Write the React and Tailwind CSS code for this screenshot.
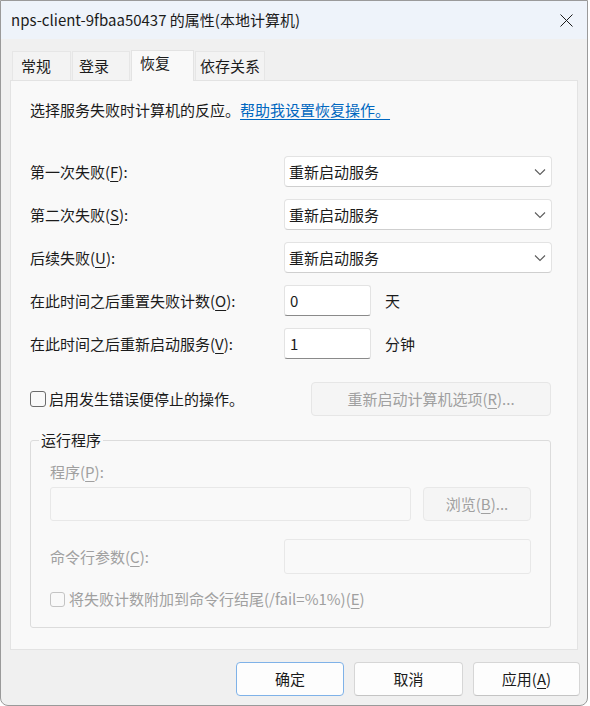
import React from 'react';

// access-key letter with underline
const K = ({ c }) => <span className="underline underline-offset-[3px]">{c}</span>;

const Chevron = () => (
  <svg width="12" height="8" viewBox="0 0 12 8">
    <path d="M1 1.5 L6 6.5 L11 1.5" fill="none" stroke="#5c5c5c" strokeWidth="1.1" />
  </svg>
);

const Select = ({ value }) => (
  <div className="w-[268px] h-full flex items-center justify-between pl-[4px] pr-[5px] bg-white border border-[#e3e3e3] border-b-[#cfcfcf] rounded-[4px]">
    <span>{value}</span>
    <Chevron />
  </div>
);

const TextBox = ({ value }) => (
  <div className="w-[87px] h-full flex items-center pl-[5px] bg-white border border-[#e3e3e3] border-b-[#8a8a8a] rounded-[3px]">
    {value}
  </div>
);

const Tab = ({ label, active, width, pad, first }) =>
  active ? (
    <div
      className={`relative z-10 ml-[1px] h-[31px] mb-[-1px] flex items-start pt-[2px] bg-[#f9f9f9] border-x border-t border-[#e3e3e3] ${width} ${pad}`}
    >
      {label}
    </div>
  ) : (
    <div
      className={`h-[29px] flex items-start pt-[4px] bg-[#f3f3f3] border-x border-t border-[#e6e6e6] ${first ? '' : 'ml-[1px]'} ${width} ${pad}`}
    >
      {label}
    </div>
  );

const Row = ({ label, children }) => (
  <div className="flex items-center h-[31px]">
    <div className="w-[254px]">{label}</div>
    {children}
  </div>
);

export default function App() {
  return (
    <div className="w-[590px] h-[706px] bg-white font-['Noto_Sans_CJK_SC','Noto_Sans',sans-serif] text-[15px] leading-[20px] text-[#1b1b1b]">
      <div className="w-[588px] h-[706px] flex flex-col bg-[#f0f0f0] border border-[#9a9a9a] rounded-b-[8px] overflow-hidden">
        {/* Title bar */}
        <div className="h-[38px] shrink-0 flex items-center justify-between pl-[10px] pr-[14px] bg-[#eef3fa]">
          <span>nps-client-9fbaa50437 的属性(本地计算机)</span>
          <svg width="13" height="13" viewBox="0 0 13 13">
            <path d="M0.5 0.5 L12.5 12.5 M12.5 0.5 L0.5 12.5" stroke="#1b1b1b" strokeWidth="1" />
          </svg>
        </div>

        <div className="flex-1 flex flex-col px-[9px]">
          {/* Tabs */}
          <div className="h-[41px] flex items-end pl-[2px]">
            <Tab label="常规" width="w-[59px]" pad="pl-[8px]" first />
            <Tab label="登录" width="w-[58px]" pad="pl-[6px]" />
            <Tab label="恢复" width="w-[63px]" pad="pl-[8px]" active />
            <Tab label="依存关系" width="w-[70px]" pad="pl-[4px]" />
          </div>

          {/* Panel */}
          <div className="h-[570px] w-[568px] bg-[#f9f9f9] border border-[#e3e3e3] pl-[19px] pt-[19px]">
            <div>
              选择服务失败时计算机的反应。
              <span className="text-[#0067c0] underline underline-offset-[3px]">帮助我设置恢复操作。</span>
            </div>

            <div className="mt-[36px] flex flex-col gap-[12px]">
              <Row label={<>第一次失败(<K c="F" />):</>}>
                <Select value="重新启动服务" />
              </Row>
              <Row label={<>第二次失败(<K c="S" />):</>}>
                <Select value="重新启动服务" />
              </Row>
              <Row label={<>后续失败(<K c="U" />):</>}>
                <Select value="重新启动服务" />
              </Row>
              <Row label={<>在此时间之后重置失败计数(<K c="O" />):</>}>
                <TextBox value="0" />
                <span className="ml-[14px]">天</span>
              </Row>
              <Row label={<>在此时间之后重新启动服务(<K c="V" />):</>}>
                <TextBox value="1" />
                <span className="ml-[14px]">分钟</span>
              </Row>
            </div>

            <div className="mt-[23px] h-[34px] flex items-center">
              <div className="w-[16px] h-[16px] rounded-[3px] border border-[#6b6b6b] bg-[#f9f9f9]" />
              <span className="ml-[3px]">启用发生错误便停止的操作。</span>
              <div className="ml-auto mr-[26px] w-[240px] h-[34px] flex items-center justify-center bg-[#f5f5f5] border border-[#e6e6e6] rounded-[4px] text-[#a0a0a0]">
                重新启动计算机选项(<K c="R" />)...
              </div>
            </div>

            {/* Group box */}
            <fieldset className="mt-[14px] w-[521px] border border-[#dcdcdc] rounded-[3px]">
              <legend className="ml-[8px] px-[2px]">运行程序</legend>
              <div className="px-[19px] pt-[12px] pb-[18px] text-[#a0a0a0]">
                <div>程序(<K c="P" />):</div>
                <div className="mt-[5px] h-[34px] flex">
                  <div className="w-[361px] h-full bg-[#f9f9f9] border border-[#e8e8e8] rounded-[3px]" />
                  <div className="ml-[12px] w-[108px] h-full flex items-center justify-center bg-[#f5f5f5] border border-[#e8e8e8] rounded-[4px]">
                    浏览(<K c="B" />)...
                  </div>
                </div>
                <div className="mt-[18px] h-[35px] flex items-center">
                  <div className="w-[234px]">命令行参数(<K c="C" />):</div>
                  <div className="w-[247px] h-full bg-[#f9f9f9] border border-[#e8e8e8] rounded-[3px]" />
                </div>
                <div className="mt-[15px] h-[20px] flex items-center">
                  <div className="w-[15px] h-[15px] rounded-[3px] border border-[#c4c4c4] bg-[#f9f9f9]" />
                  <span className="ml-[4px]">将失败计数附加到命令行结尾(/fail=%1%)(<K c="E" />)</span>
                </div>
              </div>
            </fieldset>
          </div>

          {/* Dialog buttons */}
          <div className="mt-[12px] mr-[-2px] flex justify-end gap-[10px]">
            <div className="w-[108px] h-[34px] flex items-center justify-center bg-[#fdfdfd] border border-[#7fb2e8] rounded-[4px]">
              确定
            </div>
            <div className="w-[109px] h-[34px] flex items-center justify-center bg-[#fdfdfd] border border-[#d6d6d6] border-b-[#c4c4c4] rounded-[4px]">
              取消
            </div>
            <div className="w-[107px] h-[34px] flex items-center justify-center bg-[#fdfdfd] border border-[#d6d6d6] border-b-[#c4c4c4] rounded-[4px]">
              应用(<K c="A" />)
            </div>
          </div>
        </div>
      </div>
    </div>
  );
}
